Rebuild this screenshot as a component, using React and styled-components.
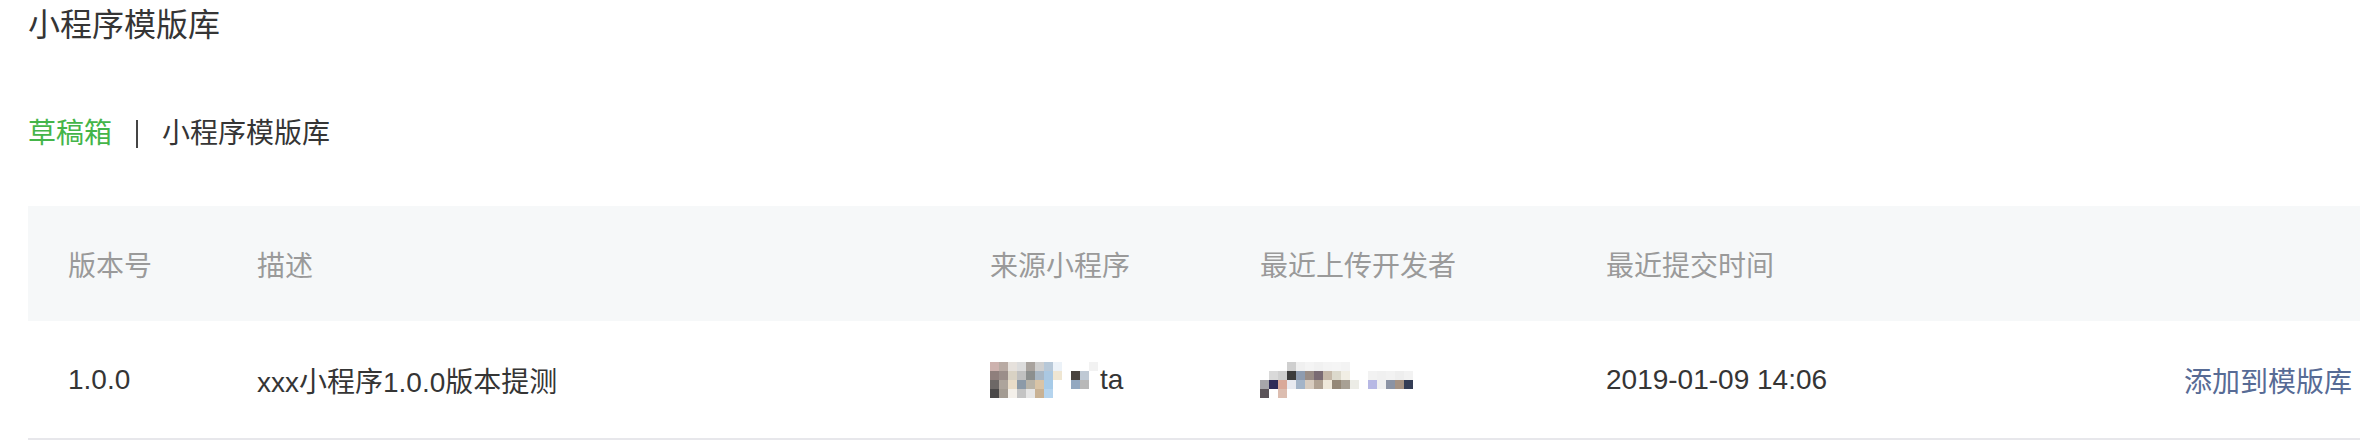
import React from "react";
import styled, { createGlobalStyle } from "styled-components";

const Global = createGlobalStyle`
  html, body { margin: 0; padding: 0; background: #fff; }
  body {
    font-family: "Liberation Sans", "Noto Sans CJK SC", sans-serif;
    color: #353535;
  }
`;

const Page = styled.div`
  padding-left: 28px;
  overflow: hidden;
`;

const Title = styled.h2`
  margin: 0;
  font-size: 32px;
  line-height: 50px;
  font-weight: 400;
  color: #353535;
`;

const Breadcrumb = styled.nav`
  display: flex;
  align-items: center;
  margin-top: 64px;
  height: 40px;
  font-size: 28px;
  line-height: 40px;
`;

const Crumb = styled.a`
  color: ${(p) => (p.$active ? "#44b549" : "#353535")};
  text-decoration: none;
`;

const Sep = styled.span`
  width: 2px;
  height: 28px;
  background: #454545;
  margin: 0 24px;
`;

const Table = styled.div`
  margin-top: 52px;
  font-size: 28px;
`;

const Row = styled.div`
  display: grid;
  grid-template-columns: 189px 733px 270px 346px 1fr auto;
  align-items: center;
  height: ${(p) => (p.$head ? "115px" : "117px")};
  background: ${(p) => (p.$head ? "#f6f8f9" : "#fff")};
  color: ${(p) => (p.$head ? "#9a9a9a" : "#353535")};
  border-bottom: ${(p) => (p.$head ? "none" : "2px solid #e7e7eb")};
`;

const Cell = styled.div`
  padding-left: 40px;
  white-space: nowrap;
  display: flex;
  align-items: center;
  padding-right: ${(p) => (p.$last ? "8px" : "0")};
`;

const ActionLink = styled.a`
  color: #576b95;
  text-decoration: none;
`;

const MosaicSvg = styled.svg`
  display: block;
  flex: none;
`;

const Tail = styled.span`
  margin-left: 2px;
`;

function Mosaic({ rows, size = 9, offsetY = 0 }) {
  const w = Math.max(...rows.map((r) => r.length)) * size;
  const h = rows.length * size;
  return (
    <MosaicSvg width={w} height={h} style={{ marginTop: offsetY }}>
      {rows.map((r, y) =>
        r.map((c, x) =>
          c ? <rect key={`${x}-${y}`} x={x * size} y={y * size} width={size} height={size} fill={c} /> : null
        )
      )}
    </MosaicSvg>
  );
}

const srcMosaic = [
  ["#cdb2ae", "#b8aaa3", "#e6e1dc", "#dcdcdc", "#a9a39e", "#cfcfcf", "#b7c8d8", "#ecf2f8", null, null, null, "#f2f2f2"],
  ["#8f7f7c", "#9b8e8a", "#d9d2c4", "#c0c0c0", "#8c8f8e", "#a9b7c4", "#aac8e2", "#efe6d2", null, "#4a4540", "#bfc9d4", null],
  ["#6d6866", "#ada49c", "#e9dcc8", "#8c9aa8", "#b9b4a8", "#d9c4a6", "#a7cbe8", null, null, "#93a8c0", "#b8b8b8", null],
  ["#4a4848", "#a39b92", "#f4f0ea", "#c4c4c4", "#e6e6e6", "#c9b294", "#b5d4ee", null, null, null, null, null],
];

const devMosaic = [
  [null, null, null, "#cfcfcf", "#f0f0f0", "#f4f4f4", "#f1f1f1", "#f4f4f4", "#f5f5f5", "#f3f3f3", null, null, null, null, null, null, null, null, null, null],
  [null, "#d9d9d9", "#cfcfcf", "#3b3b3b", "#8e9cb0", "#9a8d86", "#7a6b73", "#c5b8a8", "#dcd9cc", "#f1eee4", null, null, "#f2f2f2", "#f0f0f0", "#f2f2f2", "#eeeeee", "#f2f2f2", null, null, null],
  ["#a6a6aa", "#2f2c58", "#d9a999", "#e8eaf0", "#a3b4c8", "#d8ccbf", "#b0a192", "#efe8da", "#958877", "#a8a094", "#ecece6", null, "#b7b8e4", "#f0f0f0", "#8b93a4", "#a69282", "#343d55", null, null, null],
  ["#5b5459", null, "#dcbdb0", null, null, null, null, null, null, null, null, null, null, null, null, null, null, null, null, null],
];

export default function App() {
  return (
    <Page>
      <Global />
      <Title>小程序模版库</Title>
      <Breadcrumb>
        <Crumb $active href="#">草稿箱</Crumb>
        <Sep />
        <Crumb href="#">小程序模版库</Crumb>
      </Breadcrumb>
      <Table>
        <Row $head>
          <Cell>版本号</Cell>
          <Cell>描述</Cell>
          <Cell>来源小程序</Cell>
          <Cell>最近上传开发者</Cell>
          <Cell>最近提交时间</Cell>
          <Cell $last />
        </Row>
        <Row>
          <Cell>1.0.0</Cell>
          <Cell>xxx小程序1.0.0版本提测</Cell>
          <Cell>
            <Mosaic rows={srcMosaic} />
            <Tail>ta</Tail>
          </Cell>
          <Cell>
            <Mosaic rows={devMosaic} />
          </Cell>
          <Cell>2019-01-09 14:06</Cell>
          <Cell $last>
            <ActionLink href="#">添加到模版库</ActionLink>
          </Cell>
        </Row>
      </Table>
    </Page>
  );
}
